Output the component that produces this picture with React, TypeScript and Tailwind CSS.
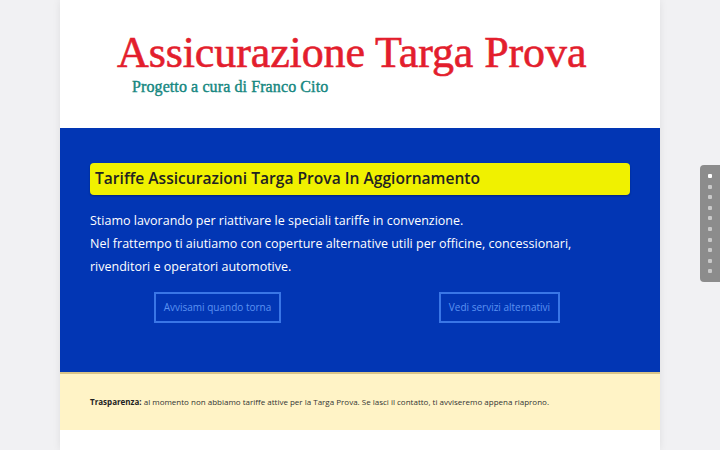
import React from "react";

const dots = [0, 1, 2, 3, 4, 5, 6, 7, 8, 9];

export default function App() {
  return (
    <div className="min-h-[450px] bg-[#f1f1f3] font-['Open_Sans',sans-serif]">
      <div className="mx-auto w-[600px] bg-white shadow-[0_0_8px_rgba(0,0,0,0.08)]">
        {/* header */}
        <header className="h-[128px] pl-[57px] pt-[29px]">
          <h1 className="font-['Liberation_Serif',serif] text-[44px] leading-[48px] text-[#e31e2d] tracking-[-0.1px] [-webkit-text-stroke:0.6px_#e31e2d]">
            Assicurazione Targa Prova
          </h1>
          <p className="ml-[15px] mt-[-2px] font-['Liberation_Serif',serif] text-[16px] text-[#15877f] tracking-[0.1px] [-webkit-text-stroke:0.4px_#15877f]">
            Progetto a cura di Franco Cito
          </p>
        </header>

        {/* main */}
        <section className="h-[244px] bg-[#0236b4] px-[30px] pt-[35px]">
          <div className="flex h-[32px] items-center rounded-[4px] bg-[#f0f100] pl-[5px] shadow-[0_1px_2px_rgba(0,0,0,0.3)]">
            <h2 className="text-[15.6px] font-semibold text-[#222]">
              Tariffe Assicurazioni Targa Prova In Aggiornamento
            </h2>
          </div>
          <p className="mt-[14px] text-[12.5px] leading-[23px] text-white">
            Stiamo lavorando per riattivare le speciali tariffe in convenzione.
            <br />
            Nel frattempo ti aiutiamo con coperture alternative utili per officine, concessionari,
            <br />
            rivenditori e operatori automotive.
          </p>
          <div className="mt-[14px] grid grid-cols-2 gap-[30px]">
            <div className="flex justify-center">
              <a className="flex h-[31px] w-[127px] items-center justify-center border-2 border-[#3a76e6] text-[10px] text-[#5b92f2]">
                Avvisami quando torna
              </a>
            </div>
            <div className="flex justify-center">
              <a className="ml-[-6px] flex h-[31px] w-[121px] items-center justify-center border-2 border-[#3a76e6] text-[10px] text-[#5b92f2]">
                Vedi servizi alternativi
              </a>
            </div>
          </div>
        </section>

        {/* notice */}
        <div className="flex h-[58px] items-center border-t-2 border-[#d9c489] bg-[#fff3c6] pl-[30px]">
          <p className="text-[8px] text-[#333]">
            <b className="font-bold text-[#222]">Trasparenza:</b> al momento non abbiamo tariffe attive per la Targa Prova. Se lasci il contatto, ti avviseremo appena riaprono.
          </p>
        </div>
        <div className="h-[20px] bg-white" />
      </div>

      {/* side dots nav */}
      <nav className="fixed right-0 top-[165px] flex w-[20px] flex-col items-center gap-[6.6px] rounded-l-[4px] bg-[#8c8c8c] py-[9px]">
        {dots.map((d) => (
          <span
            key={d}
            className={d === 0 ? "h-[4px] w-[4px] rounded-[1px] bg-white" : "h-[4px] w-[4px] rounded-[1px] bg-[#c9c9c9]"}
          />
        ))}
      </nav>
    </div>
  );
}
